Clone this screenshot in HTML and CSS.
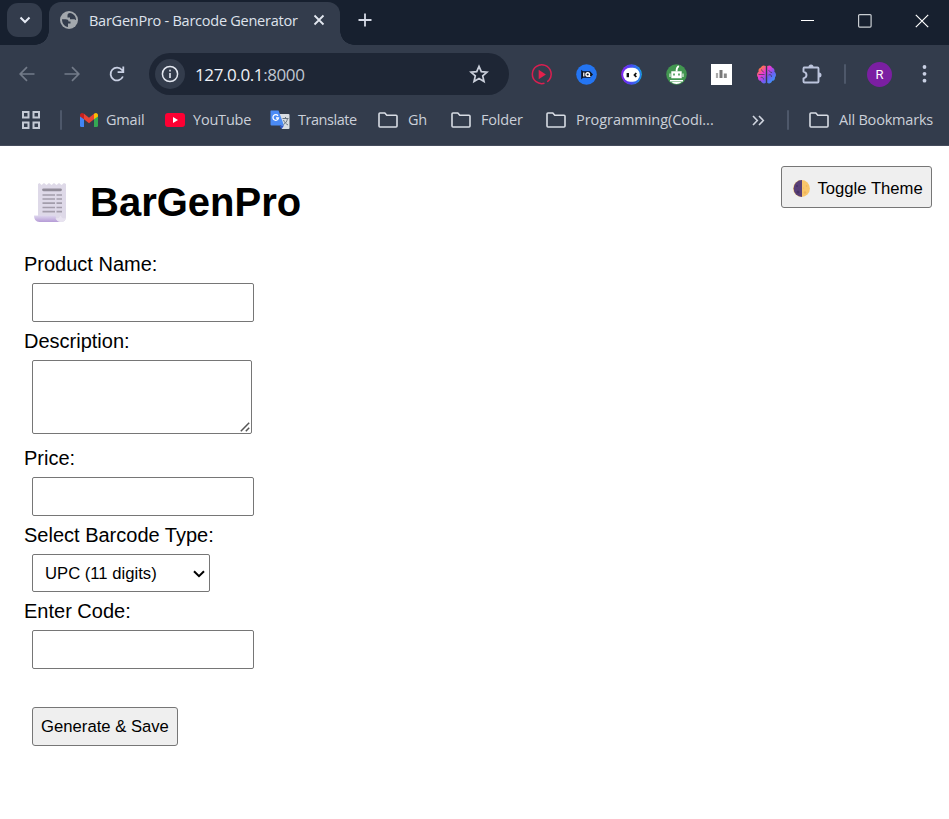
FILE: index.html
```html
<!DOCTYPE html>
<html lang="en">
<head>
<meta charset="utf-8">
<title>BarGenPro - Barcode Generator</title>
<link rel="stylesheet" href="styles.css">
</head>
<body>
<header class="browser">
  <div class="tabstrip">
    <div class="tab-search"><svg width="12" height="8" viewBox="0 0 12 8"><path d="M1.5 1.5 6 6l4.500-4.500" fill="none" stroke="#e6ebf5" stroke-width="2"/></svg></div>
    <div class="tab">
      <svg width="18" height="18" viewBox="0 0 18 18"><circle cx="9" cy="9" r="9" fill="#a3a8ad"/><path d="M2 8.200h3.500c2 0 3 .8 3 2.300h2v2H8v3.500C4.500 15.500 2 12.500 2 8.200M10 2c-1.800.2-2.500 1-2.500 2.500v2H10v1.700h4.500c.5 0 .7.800 1.500.800C16 5 13.500 2.500 10 2" fill="#333c4c"/></svg>
      <span class="tab-title">BarGenPro - Barcode Generator</span>
      <svg width="12" height="12" viewBox="0 0 12 12"><path d="M1.500 1.500l9 9m0-9-9 9" stroke="#e3e7f0" stroke-width="1.800"/></svg>
    </div>
    <svg class="new-tab" width="14" height="14" viewBox="0 0 14 14"><path d="M7 .5v13M.5 7h13" stroke="#d5dae6" stroke-width="1.800"/></svg>
    <div class="window-controls">
      <svg width="14" height="14" viewBox="0 0 14 14"><path d="M0 6.500h13" stroke="#fff"/></svg>
      <svg width="14" height="14" viewBox="0 0 14 14"><rect x=".6" y=".6" width="12.500" height="12.500" rx="1" fill="none" stroke="#c9cdd2" stroke-width="1.200"/></svg>
      <svg width="14" height="14" viewBox="0 0 14 14"><path d="M.8.800l12.400 12.400m0-12.400L.8 13.200" stroke="#fff" stroke-width="1.200"/></svg>
    </div>
  </div>

  <div class="toolbar">
    <svg class="nav" width="16" height="16" viewBox="0 0 16 16"><path d="M15.500 8H1.500M8 1.200 1.200 8 8 14.800" fill="none" stroke="#737b89" stroke-width="1.700"/></svg>
    <svg class="nav" width="16" height="16" viewBox="0 0 16 16"><path d="M.5 8h14M8 1.200 14.800 8 8 14.800" fill="none" stroke="#737b89" stroke-width="1.700"/></svg>
    <svg class="nav" width="16" height="16" viewBox="0 0 16 16"><path d="M13.900 10.500A6.400 6.400 0 1 1 13 4l1.500 1.700M14.300.5v5.700H8.600" fill="none" stroke="#c9d0e3" stroke-width="1.800"/></svg>
    <div class="omnibox">
      <span class="site-info"><svg width="18" height="18" viewBox="0 0 18 18"><circle cx="9" cy="9" r="7.600" fill="none" stroke="#e3e7f0" stroke-width="1.500"/><path d="M9 8v5M9 4.800v1.700" stroke="#e3e7f0" stroke-width="1.600"/></svg></span>
      <span class="url">127.0.0.1<span class="port">:8000</span></span>
      <svg width="20" height="20" viewBox="0 0 20 20"><path d="M10 2.300l2.300 5.300 5.800.5-4.400 3.800 1.300 5.600-5-3-5 3 1.300-5.600L1.900 8.100l5.800-.5z" fill="none" stroke="#cbd0dc" stroke-width="1.700"/></svg>
    </div>
    <div class="extensions">
      <svg width="21" height="21" viewBox="0 0 21 21"><path d="M13.500 19.200A9.400 9.400 0 1 1 18 16.200q-.8 1.300-2 1.300" fill="none" stroke="#d91f50" stroke-width="1.500"/><path d="M7.700 5.800v9.500l7.200-4.700z" fill="#e3204c"/></svg>
      <svg width="21" height="21" viewBox="0 0 21 21"><circle cx="10.500" cy="10.500" r="10.300" fill="#2475f2"/><path d="M5.200 5.800l1.800 1.500h7l3 3.200-3 3.300H7l-1.800 1.700z" fill="#0c1220"/><path d="M7.800 8.500v4" stroke="#fff" stroke-width="1.300"/><circle cx="11.700" cy="10.500" r="1.800" fill="#0c1220" stroke="#fff" stroke-width="1.400"/><path d="M12.500 12.500h2" stroke="#fff"/></svg>
      <svg width="21" height="21" viewBox="0 0 21 21"><defs><linearGradient id="face-ring" x1="0" y1="1" x2="1" y2="1"><stop stop-color="#9d1cf5"/><stop offset=".45" stop-color="#4b4cf0"/><stop offset="1" stop-color="#11b5ea"/></linearGradient></defs><circle cx="10.500" cy="10.500" r="10.300" fill="url(#face-ring)"/><circle cx="10.500" cy="10.500" r="9" fill="none" stroke="#4636f5" stroke-width="1" opacity=".5"/><rect x="2.200" y="3.800" width="16.600" height="14" rx="7" fill="#fff"/><path d="M6.800 9v4.200" stroke="#111" stroke-width="2.400"/><path d="M15.300 9l-1.800 2 1.800 2" fill="none" stroke="#111" stroke-width="1.800"/></svg>
      <svg width="21" height="21" viewBox="0 0 21 21"><circle cx="10.500" cy="10.500" r="10.300" fill="#429650"/><path d="M5.300 7.300h10.400v7H5.300zM3.500 9.500h1v3.500h-1zM16.500 9.500h1V13h-1zM4 16h13v1.500H4zM5.500 18h10c-2.500 2.500-7.500 2.500-10 0" fill="#fff"/><path d="M10.500 7.500c0-3 .5-4.500 2.300-5.500" fill="none" stroke="#fff" stroke-width="1.800"/><path d="M7.200 9.500h1.600v2H7.200zM12.200 9.500h1.600v2h-1.600z" fill="#429650"/></svg>
      <svg width="21" height="21" viewBox="0 0 21 21"><path d="M0 0h21v21H0z" fill="#fff"/><path d="M6 9v5" stroke="#aaa" stroke-width="2.200"/><path d="M10 6v8" stroke="#777" stroke-width="3"/><path d="M14.300 9.500V14" stroke="#888" stroke-width="3"/></svg>
      <svg width="21" height="21" viewBox="0 0 21 21"><defs><linearGradient id="brain" x1="0" y1="0" x2="1" y2="1"><stop stop-color="#ff9c24"/><stop offset=".2" stop-color="#ff6b62"/><stop offset=".38" stop-color="#ec39d5"/><stop offset=".62" stop-color="#725bf1"/><stop offset="1" stop-color="#21b2ff"/></linearGradient></defs><path d="M9.800 2C7 .5 5.500 2 5 3.500 3 4 2 6 2.700 7.500.8 9 .5 12 2 13.300c-.2 3 1.500 3.500 2.800 3.500 1 3 3.700 3 5 2zM11.200 2c2.800-1.500 4.300 0 4.800 1.500 2 .5 3 2.500 2.300 4 1.900 1.500 2.200 4.500.7 5.800.2 3-1.500 3.500-2.800 3.500-1 3-3.700 3-5 2z" fill="url(#brain)"/><path d="M2.500 10.500h6M5.500 5.500c0 2 2 1.500 2.300 3M4.500 14c1-1.500 3-.5 3 1.500M12.500 6.500c2 0 1 2.500 3.500 2M12.500 11c2-1 3 0 3 2" stroke="#333c4c" stroke-width=".7" fill="none"/></svg>
      <svg width="22" height="21" viewBox="0 0 22 21"><path d="M3 3.500h13.500q1 0 1 1v13q0 1-1 1H3.500q-1 0-1-1V14.300q3-.8 3-3.300t-3-3.300V4.500q0-1 1-1Z" fill="none" stroke="#bcc4dc" stroke-width="1.900" stroke-linejoin="round"/><path d="M7.500 3a2.500 2.500 0 0 1 5 0M18 8.500a2.500 2.500 0 0 1 0 5" fill="#bcc4dc"/></svg>
    </div>
    <i class="divider toolbar-divider"></i>
    <span class="avatar">R</span>
    <svg class="menu" width="5" height="19" viewBox="0 0 5 19"><g fill="#c9d0e3"><circle cx="2.500" cy="2" r="1.900"/><circle cx="2.500" cy="8.800" r="1.900"/><circle cx="2.500" cy="15.700" r="1.900"/></g></svg>
  </div>

  <nav class="bookmarks">
    <svg class="apps" width="18" height="18" viewBox="0 0 18 18"><path d="M1 1h5.500v5.500H1zM11.500 1H17v5.500h-5.500zM1 11.500h5.500V17H1zM11.500 11.500H17V17h-5.500z" fill="none" stroke="#c5cad5" stroke-width="2"/></svg>
    <i class="divider"></i>
    <a class="bm gmail"><svg width="18" height="14" viewBox="0 0 18 14"><path d="M0 2.500V12.500Q0 14 1.500 14H4V5.500z" fill="#4285f4"/><path d="M18 2.500V12.500Q18 14 16.500 14H14V5.500z" fill="#34a853"/><path d="M4 .8l5 4 5-4v5.500l-5 4-5-4z" fill="#ea4335"/><path d="M0 2.300C0 .3 2-.8 4 .8v5.500L0 3.500z" fill="#c5221f"/><path d="M18 2.300c0-2-2-3.100-4-1.500v5.500l4-2.800z" fill="#fbbc04"/></svg><span>Gmail</span></a>
    <a class="bm youtube"><svg width="20" height="14" viewBox="0 0 20 14"><rect width="20" height="14" rx="3" fill="#f03"/><path d="M8 4v6l5-3z" fill="#fff"/></svg><span>YouTube</span></a>
    <a class="bm translate"><svg width="20" height="20" viewBox="0 0 20 20"><path d="M9 4h9.500q1 0 1 1v13q0 1-1 1H12z" fill="#d9dde2"/><path d="M1 .500h7.500L14 15.500H1.500Q.5 15.500.5 14.500v-13q0-1 .5-1" fill="#4b8bf5"/><path d="M9.500 15.500H14l-2.500 3.800z" fill="#3157c5"/><path d="M8 5.800A2.800 2.800 0 1 0 8.500 8H6" fill="none" stroke="#fff" stroke-width="1.300"/><path d="M12.500 8.500h6M15.500 7v1.500M17.500 8.500c-.5 3-2 4.700-4 6M13.500 10c1 2.500 2.500 3.800 4.500 5" fill="none" stroke="#69747f"/></svg><span>Translate</span></a>
    <a class="bm gh"><svg width="20" height="16" viewBox="0 0 20 16"><path class="folder" d="M1 14V2q0-1 1-1h4.800l2 2.300H18q1 0 1 1V14q0 1-1 1H2q-1 0-1-1Z"/></svg><span>Gh</span></a>
    <a class="bm folder-link"><svg width="20" height="16" viewBox="0 0 20 16"><path class="folder" d="M1 14V2q0-1 1-1h4.800l2 2.300H18q1 0 1 1V14q0 1-1 1H2q-1 0-1-1Z"/></svg><span>Folder</span></a>
    <a class="bm programming"><svg width="20" height="16" viewBox="0 0 20 16"><path class="folder" d="M1 14V2q0-1 1-1h4.800l2 2.300H18q1 0 1 1V14q0 1-1 1H2q-1 0-1-1Z"/></svg><span>Programming(Codi...</span></a>
    <svg class="overflow" width="13" height="11" viewBox="0 0 13 11"><path d="M1 1l4.300 4.500L1 10M7 1l4.300 4.500L7 10" fill="none" stroke="#d0d5df" stroke-width="1.600"/></svg>
    <i class="divider"></i>
    <a class="bm all"><svg width="20" height="16" viewBox="0 0 20 16"><path class="folder" d="M1 14V2q0-1 1-1h4.800l2 2.300H18q1 0 1 1V14q0 1-1 1H2q-1 0-1-1Z"/></svg><span>All Bookmarks</span></a>
  </nav>
</header>

<main class="page">
  <div class="page-head">
    <h1>
      <svg width="33" height="40" viewBox="0 0 33 40"><defs><linearGradient id="roll" x2="0" y2="1"><stop stop-color="#ded7ee"/><stop offset="1" stop-color="#b59bd6"/></linearGradient></defs><path d="M4 1l1.500-1 2 2 2.500-2 2.500 2L15 0l2.500 2L20 0l2.500 2L25 0l2.500 2L30 0l2 1v33q0 5-5 5H9L4 33z" fill="#ded9e8"/><path d="M0 32.500h21.500q0 5 6 6.500H5.500Q0 39 0 32.500" fill="url(#roll)"/><path d="M21.500 35q4 1 5-2.500 1.500 4 5.300 2.500-1 4-5 4-4 0-5.300-4" fill="#e8e3f0"/><path d="M9.500 6.800h17" stroke="#918c99" stroke-width="2.800" stroke-linecap="round"/><path d="M8.500 12h12.500M22.500 12H28M8.500 16h12.500M22.500 16H28M8.500 20.200h12.500M22.500 20.200H28M8.500 24.500h12.500M22.500 24.500H28M8.500 28.700h12.500M22.500 28.700H28" stroke="#a39dab" stroke-width="1.700"/></svg>
      <span>BarGenPro</span>
    </h1>
    <button class="theme-toggle"><svg width="17" height="17" viewBox="0 0 17 17"><circle cx="8.500" cy="8.500" r="8.400" fill="#f9c66b"/><path d="M9 .1a8.400 8.400 0 1 0 0 16.800z" fill="#594078"/><g fill="#efb35c"><circle cx="12" cy="12.500" r="1.300"/><circle cx="13.500" cy="6" r=".8"/><circle cx="10.500" cy="8" r=".6"/></g><g fill="#473266"><circle cx="5" cy="12" r="1.500"/><circle cx="4" cy="6" r="1"/></g></svg><span>Toggle Theme</span></button>
  </div>
  <form class="product-form">
    <label for="name">Product Name:</label>
    <input id="name" type="text">
    <label for="description">Description:</label>
    <div class="textarea-wrap">
      <textarea id="description"></textarea>
      <svg class="grip" width="10" height="10" viewBox="0 0 10 10"><path d="M.8 9.200 9.200.800M5.800 9.200l3.400-3.400" stroke="#555" stroke-width="1.500"/></svg>
    </div>
    <label for="price">Price:</label>
    <input id="price" type="text">
    <label for="type">Select Barcode Type:</label>
    <div class="select-wrap">
      <select id="type"><option>UPC (11 digits)</option></select>
      <svg class="chevron" width="12" height="8" viewBox="0 0 12 8"><path d="M1 1.200l5 5 5-5" fill="none" stroke="#000" stroke-width="2"/></svg>
    </div>
    <label for="code">Enter Code:</label>
    <input id="code" type="text">
    <button class="submit" type="button">Generate &amp; Save</button>
  </form>
</main>
</body>
</html>
```
FILE: styles.css
```css
* { box-sizing: border-box; }
body { margin: 0; background: #fff; color: #000; font-family: "Liberation Sans", Arial, sans-serif; overflow: hidden; }
svg { display: block; flex: none; }

/* Browser window */
.browser { height: 146px; background: #333c4c; color: #d3d7e0; font-family: "Open Sans", "Noto Sans", sans-serif; border-bottom: 1px solid #454c5c; }
.tabstrip { height: 45px; display: flex; background: #17202f; }
.tab-search { width: 35px; height: 34px; margin: 3px 0 0 7px; border-radius: 11px; background: #333c4c; display: flex; align-items: center; justify-content: center; }
.tab { position: relative; width: 291px; height: 43px; margin: 2px 0 0 7px; padding: 0 15px 7px 11px; border-radius: 12px 12px 0 0; background: #333c4c; display: flex; align-items: center; }
.tab::before, .tab::after { content: ""; position: absolute; bottom: 0; width: 14px; height: 14px; }
.tab::before { right: 100%; background: radial-gradient(circle at 0 0, transparent 13.500px, #333c4c 14px); }
.tab::after { left: 100%; background: radial-gradient(circle at 100% 0, transparent 13.500px, #333c4c 14px); }
.tab-title { width: 224px; margin-left: 11px; padding-top: 1px; font-size: 14.500px; line-height: 20px; color: #dfe3ec; white-space: nowrap; letter-spacing: -.25px; }
.new-tab { margin: 13px 0 0 18px; }
.window-controls { margin: 14px 20px 0 auto; display: flex; gap: 43px; }

.toolbar { height: 58px; display: flex; align-items: center; }
.nav { margin-right: 29px; }
.nav:first-child { margin-left: 19px; }
.nav:nth-child(3) { margin-right: 24px; }
.omnibox { width: 360px; height: 42px; border-radius: 21px; background: #1e2635; display: flex; align-items: center; padding: 0 20px 0 6px; }
.site-info { width: 30px; height: 30px; border-radius: 50%; background: #333c4c; display: flex; align-items: center; justify-content: center; }
.url { flex: 1; margin-left: 10px; padding-top: 1px; font-size: 17px; line-height: 24px; color: #eef1f7; letter-spacing: -.4px; }
.port { color: #c0c6d1; }
.extensions { display: flex; gap: 24px; margin-left: 22px; }
.divider { width: 2px; height: 20px; border-radius: 1px; background: #4e586a; flex: none; }
.toolbar-divider { margin: 0 21px; }
.avatar { width: 25px; height: 25px; border-radius: 50%; background: #7b1fa2; color: #fff; font: 13px/25px Roboto, sans-serif; text-align: center; }
.menu { margin-left: 30px; }

.bookmarks { height: 34px; display: flex; align-items: center; font-size: 14.500px; line-height: 20px; }
.apps { margin: 0 20px 0 22px; }
.bm { display: flex; align-items: center; white-space: nowrap; letter-spacing: -.2px; }
.bm span { color: #cbd0d9; }
.folder { fill: none; stroke: #d8dce4; stroke-width: 1.600; }
.gmail { width: 85px; gap: 8px; margin-left: 18px; }
.youtube { width: 105px; gap: 8px; }
.translate { width: 108px; gap: 8px; letter-spacing: -.45px; }
.gh { width: 73px; gap: 10px; }
.folder-link { width: 95px; gap: 10px; }
.programming { width: 206px; gap: 10px; letter-spacing: -.05px; }
.overflow { margin-right: 22px; }
.all { margin-left: 20px; gap: 10px; }

/* Page */
.page { padding: 20px 17px 0 24px; }
.page-head { display: flex; justify-content: space-between; align-items: flex-start; }
h1 { margin: 13px 0 0 10px; display: flex; align-items: center; gap: 23px; font-size: 40px; line-height: 46px; font-weight: bold; }
h1 svg { margin-top: 1px; }
button { font: 16.670px "Liberation Sans", Arial, sans-serif; color: #000; background: #efefef; border: 1px solid #767676; border-radius: 3px; padding: 0; white-space: nowrap; }
.theme-toggle { width: 151px; height: 42px; display: flex; align-items: center; gap: 7.500px; padding-left: 11px; padding-top: 2px; }
.theme-toggle span { padding-top: 1px; }
.product-form { display: flex; flex-direction: column; align-items: flex-start; margin-top: 20px; }
label { font-size: 20px; line-height: 38px; }
input, textarea, select { display: block; margin: 0 0 0 8px; border: 1px solid #767676; border-radius: 2px; background: #fff; color: #000; font: 16.670px "Liberation Sans", Arial, sans-serif; }
input { width: 222px; height: 39px; }
.textarea-wrap { position: relative; margin-bottom: 5px; }
textarea { width: 220px; height: 74px; resize: none; }
.grip { position: absolute; right: 2px; bottom: 2px; }
.select-wrap { position: relative; }
select { width: 178px; height: 38px; padding: 0 0 0 12px; appearance: none; }
.chevron { position: absolute; right: 5px; top: 16px; }
.submit { width: 146px; height: 39px; margin: 38px 0 0 8px; }
```
